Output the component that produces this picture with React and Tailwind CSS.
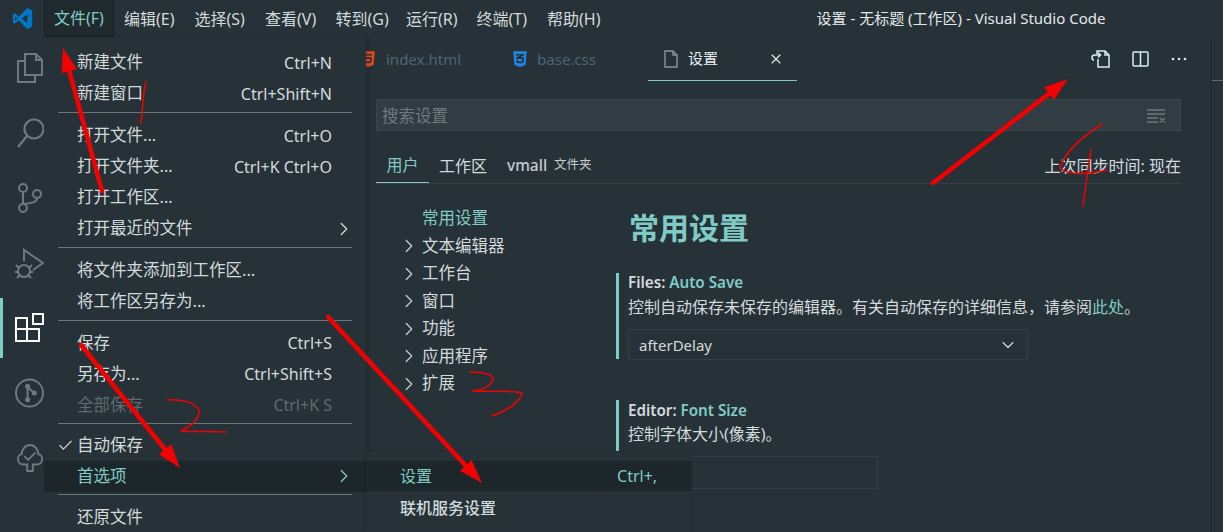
import { ChevronRight, ChevronDown, Check, X } from "lucide-react";
import { FaHtml5, FaCss3Alt } from "react-icons/fa";

const menuBar = ["文件(F)", "编辑(E)", "选择(S)", "查看(V)", "转到(G)", "运行(R)", "终端(T)", "帮助(H)"];

const fileMenu = [
  {
    items: [
      { label: "新建文件", keys: "Ctrl+N" },
      { label: "新建窗口", keys: "Ctrl+Shift+N" },
    ],
  },
  {
    sep: "h-[11px]",
    items: [
      { label: "打开文件...", keys: "Ctrl+O" },
      { label: "打开文件夹...", keys: "Ctrl+K Ctrl+O" },
      { label: "打开工作区..." },
      { label: "打开最近的文件", sub: true },
    ],
  },
  { sep: "h-[10.5px]", items: [{ label: "将文件夹添加到工作区..." }, { label: "将工作区另存为..." }] },
  {
    sep: "h-[11px]",
    items: [
      { label: "保存", keys: "Ctrl+S" },
      { label: "另存为...", keys: "Ctrl+Shift+S" },
      { label: "全部保存", keys: "Ctrl+K S", disabled: true },
    ],
  },
  { sep: "h-[9px]", items: [{ label: "自动保存", checked: true }, { label: "首选项", sub: true, active: true }] },
  { sep: "h-[10.5px]", items: [{ label: "还原文件" }] },
];

const tree = ["文本编辑器", "工作台", "窗口", "功能", "应用程序", "扩展"];

function MenuRow({ item }) {
  let color = "text-[#d4dadc]";
  if (item.disabled) color = "text-[#5f6b70]";
  if (item.active) color = "text-[#80cbc4] bg-[#1d262b]";
  return (
    <div className={`h-[31px] flex items-center pl-[33px] pr-[34px] text-[16.5px] ${color}`}>
      <span className="w-[33px] -ml-[33px] flex justify-center pl-[10px]">
        {item.checked && <Check size={17} strokeWidth={1.6} />}
      </span>
      <span>{item.label}</span>
      {item.keys && <span className="ml-auto text-[16px]">{item.keys}</span>}
      {item.sub && <ChevronRight size={22} strokeWidth={1.4} className="ml-auto -mr-[23px]" />}
    </div>
  );
}

function FilesIcon() {
  return (
    <svg width="26" height="30" viewBox="0 0 26 30" fill="none" stroke="#6e7a7f" strokeWidth="2">
      <path d="M8 1h11l6 6v15H8z" />
      <path d="M19 1v6h6" />
      <path d="M8 8H1v21h17v-7" />
    </svg>
  );
}

function SearchIcon() {
  return (
    <svg width="28" height="30" viewBox="0 0 28 30" fill="none" stroke="#6e7a7f" strokeWidth="2.2">
      <circle cx="17" cy="11" r="9.5" />
      <path d="M10 18L1 29" />
    </svg>
  );
}

function GitIcon() {
  return (
    <svg width="24" height="30" viewBox="0 0 24 30" fill="none" stroke="#6e7a7f" strokeWidth="2">
      <circle cx="5" cy="5" r="4" />
      <circle cx="5" cy="25" r="4" />
      <circle cx="19" cy="11" r="4" />
      <path d="M5 9v12M19 15c0 4-4 5-14 6" />
    </svg>
  );
}

function DebugIcon() {
  return (
    <svg width="29" height="31" viewBox="0 0 29 31" fill="none" stroke="#6e7a7f" strokeWidth="2">
      <path d="M9 13V2l19 13-10 7" />
      <circle cx="9" cy="23" r="6" />
      <path d="M1 17l3 3M17 17l-3 3M0 24h3M15 24h3M2 30l3-3M16 30l-3-3" />
    </svg>
  );
}

function ExtIcon() {
  return (
    <svg width="29" height="29" viewBox="0 0 29 29" fill="none" stroke="#ffffff" strokeWidth="2">
      <path d="M1 5h11v23H1zM1 16h23v12H12M12 5v11" />
      <rect x="18" y="1" width="10" height="10" />
    </svg>
  );
}

function RemoteIcon() {
  return (
    <svg width="29" height="30" viewBox="0 0 30 30" fill="none" stroke="#6e7a7f" strokeWidth="2">
      <circle cx="15" cy="15" r="14" />
      <path d="M13 9v13M13 9l7 6" />
      <circle cx="13" cy="8" r="1.6" fill="#6e7a7f" />
      <circle cx="20" cy="15" r="1.6" fill="#6e7a7f" />
      <circle cx="13" cy="22" r="1.6" fill="#6e7a7f" />
    </svg>
  );
}

function TreeIcon() {
  return (
    <svg width="26" height="30" viewBox="0 0 28 30" fill="none" stroke="#6e7a7f" strokeWidth="2">
      <path d="M11 29v-7H7c-4 0-6-3-6-6 0-3 2-5 4-5 0-5 4-10 9-10s9 5 9 10c2 0 4 2 4 5 0 3-2 6-6 6h-4v7z" />
      <path d="M8 13l4 4 8-8" />
    </svg>
  );
}

function Annotations() {
  const arrows = [
    [102, 191, 63, 48],
    [81, 345, 180, 468],
    [328, 317, 482, 483],
    [933, 183, 1068, 79],
  ];
  return (
    <svg className="absolute inset-0 pointer-events-none" width="1223" height="532" fill="none" stroke="#f50000">
      {arrows.map(([x1, y1, x2, y2]) => {
        const a = Math.atan2(y2 - y1, x2 - x1);
        const bx = x2 - 24 * Math.cos(a);
        const by = y2 - 24 * Math.sin(a);
        const px = 8 * Math.sin(a);
        const py = 8 * Math.cos(a);
        return (
          <g key={x1}>
            <line x1={x1} y1={y1} x2={bx} y2={by} strokeWidth="4.5" strokeLinecap="round" />
            <polygon points={`${x2},${y2} ${bx + px},${by - py} ${bx - px},${by + py}`} fill="#f50000" stroke="none" />
          </g>
        );
      })}
      <g strokeWidth="1.5" strokeLinecap="round" strokeLinejoin="round">
        <path d="M146 82C143 92 143 105 141 123" />
        <path d="M167 400C180 399 195 402 199 410C200 420 190 426 181 431C195 432 210 431 226 432" />
        <path d="M470 372C482 372 494 374 493 380C490 386 482 390 473 391C490 392 512 390 522 393C520 403 505 411 492 416" />
        <path d="M1102 124C1085 135 1065 150 1060 168C1068 176 1090 174 1107 170" />
        <path d="M1091 150C1088 170 1085 190 1083 206" />
      </g>
    </svg>
  );
}

export default function App() {
  return (
    <div
      className="relative w-[1223px] h-[532px] overflow-hidden bg-[#263238] text-[#d4dadc] flex flex-col"
      style={{ fontFamily: '"Noto Sans", "Noto Sans CJK SC", sans-serif' }}
    >
      {/* title bar */}
      <div className="h-[37px] flex items-center shrink-0">
        <div className="w-[44px] flex justify-center">
          <svg width="21" height="21" viewBox="0 0 24 24">
            <path fill="#0078c8" d="M17.5 0L7.8 9.6 3 6 1 7v10l2 1 4.8-3.6L17.5 24 23 21.5v-19zM17.5 7v10L11 12zM3.5 9.5L6 12l-2.5 2.5z" />
          </svg>
        </div>
        <div className="flex text-[16px] h-full">
          {menuBar.map((m, i) => (
            <div
              key={m}
              className={
                i === 0
                  ? "flex items-center w-[70px] pl-[9px] bg-[#1f292e] text-[#80cbc4] border border-t-0 border-[#1a2227]"
                  : "flex items-center w-[70.5px] pl-[10px]"
              }
            >
              {m}
            </div>
          ))}
        </div>
        <div className="ml-[209px] text-[15px] text-[#e3e8ea] whitespace-nowrap">设置 - 无标题 (工作区) - Visual Studio Code</div>
      </div>

      <div className="flex-1 flex min-h-0">
        {/* activity bar */}
        <div className="w-[44px] shrink-0 relative flex flex-col items-start pt-[16px]">
          <div className="h-[65px] pl-[17px]"><FilesIcon /></div>
          <div className="h-[65px] pl-[17px]"><SearchIcon /></div>
          <div className="h-[65px] pl-[18px]"><GitIcon /></div>
          <div className="h-[65px] pl-[15px]"><DebugIcon /></div>
          <div className="h-[65px] pl-[15px]"><ExtIcon /></div>
          <div className="h-[65px] pl-[15px]"><RemoteIcon /></div>
          <div className="h-[65px] pl-[17px]"><TreeIcon /></div>
          <div className="absolute left-0 top-[261px] w-[3px] h-[60px] bg-[#80cbc4]" />
        </div>

        {/* side bar, covered by the menu */}
        <div className="w-[322px] shrink-0 bg-[#263238]" />

        {/* editor */}
        <div className="flex-1 min-w-0 flex flex-col">
          <div className="h-[44px] flex items-center shrink-0 text-[15px] pr-[24px]">
            <div className="w-[11px] overflow-hidden flex justify-end shrink-0">
              <FaHtml5 size={18} className="text-[#e64a19] shrink-0" />
            </div>
            <span className="ml-[9px] text-[#4f6473]">index.html</span>
            <FaCss3Alt size={18} className="ml-[50px] text-[#1e88e5]" />
            <span className="ml-[8px] text-[#4f6473]">base.css</span>
            <div className="ml-[52px] w-[149px] h-full flex items-center border-b border-[#80cbc4] pl-[16px]">
              <svg width="14" height="18" viewBox="0 0 14 18" fill="none" stroke="#8a9499" strokeWidth="1.4">
                <path d="M1 1h8l4 4v12H1zM9 1v4h4" />
              </svg>
              <span className="ml-[10px] text-[#e8ecee]">设置</span>
              <X size={16} strokeWidth={1.6} className="ml-[50px] text-[#e8ecee]" />
            </div>
            <div className="ml-auto flex items-center gap-[21px]">
              <svg width="20" height="20" viewBox="0 0 20 20" fill="none" stroke="#d8edf5" strokeWidth="1.5">
                <path d="M6 5V2h8l4 4v12H7v-8M14 2v4h4" />
                <path d="M9 6H4C2 6 1 7 1 8.5S2 11 3 11M7 3.5L9.5 6 7 8.5" />
              </svg>
              <svg width="18" height="18" viewBox="0 0 18 18" fill="none" stroke="#d8edf5" strokeWidth="1.5">
                <rect x="1" y="2" width="15" height="14" rx="1" />
                <path d="M8.5 2v14" />
              </svg>
              <svg width="16" height="4" viewBox="0 0 16 4" fill="#d8edf5">
                <circle cx="2" cy="2" r="1.3" />
                <circle cx="8" cy="2" r="1.3" />
                <circle cx="14" cy="2" r="1.3" />
              </svg>
            </div>
          </div>

          <div className="flex-1 min-h-0 pl-[10px] pr-[30px] pt-[18px]">
            {/* search */}
            <div className="h-[32px] bg-[#313c43] border border-[#3b464c] flex items-center pl-[5px] pr-[6px] text-[16.5px] text-[#6f7a7f]">
              <span className="mt-[3px]">搜索设置</span>
              <svg className="ml-auto mr-[8px]" width="20" height="15" viewBox="0 0 20 15" fill="none" stroke="#6f7a7f" strokeWidth="1.3">
                <path d="M1 2h18M1 6h18M1 10h11M1 14h11M14 10l5 4.5M19 10l-5 4.5" />
              </svg>
            </div>

            {/* scope tabs */}
            <div className="mt-[19px] h-[34px] flex items-center border-b border-[#3a3f40] text-[16px]">
              <div className="h-full w-[53px] flex items-center justify-center border-b border-[#80cbc4] text-[#80cbc4] pb-[2px]">用户</div>
              <span className="ml-[10px] mb-[2px]">工作区</span>
              <span className="ml-[20px] mb-[2px] text-[15.5px] font-medium text-[#c4cbce]">vmall</span>
              <span className="ml-[7px] mb-[2px] text-[12.5px] text-[#c4cbce]">文件夹</span>
              <span className="ml-auto mb-[2px]">上次同步时间: 现在</span>
            </div>

            <div className="flex">
              {/* settings tree */}
              <div className="w-[254px] pl-[46px] pt-[21px] text-[16.5px] shrink-0">
                <div className="h-[27.5px] flex items-center text-[#80cbc4]">常用设置</div>
                {tree.map((t) => (
                  <div key={t} className="h-[27.5px] flex items-center">
                    <ChevronRight size={22} strokeWidth={1.4} className="-ml-[24px] mr-[2px] text-[#c0d0d4]" />
                    {t}
                  </div>
                ))}
              </div>

              {/* settings list */}
              <div className="flex-1 min-w-0 -ml-[14px]">
                <h1 className="mt-[23px] ml-[13px] h-[40px] flex items-center text-[30px] font-bold text-[#80cbc4]">常用设置</h1>
                <div className="mt-[26px] border-l-[3px] border-[#80cbc4] pl-[9px] h-[86px]">
                  <div className="text-[15.2px] leading-[18px] font-semibold">
                    Files: <span className="text-[#80cbc4]">Auto Save</span>
                  </div>
                  <div className="mt-[7px] text-[16px] leading-[18px]">
                    控制自动保存未保存的编辑器。有关自动保存的详细信息，请参阅<span className="text-[#80cbc4]">此处</span>。
                  </div>
                  <div className="mt-[13px] w-[400px] h-[31px] border border-[#333f45] flex items-center pl-[10px] pr-[9px] text-[15px]">
                    <span className="mt-[1px]">afterDelay</span>
                    <ChevronDown size={20} strokeWidth={1.4} className="ml-auto" />
                  </div>
                </div>
                <div className="mt-[41px] border-l-[3px] border-[#80cbc4] pl-[9px] h-[51px]">
                  <div className="text-[15.2px] leading-[18px] font-semibold pt-[1px]">
                    Editor: <span className="text-[#80cbc4]">Font Size</span>
                  </div>
                  <div className="mt-[6px] text-[16px] leading-[18px]">控制字体大小(像素)。</div>
                  <div className="mt-[13px] w-[250px] h-[33px] border border-[#333f45]" />
                </div>
              </div>
            </div>
          </div>
        </div>

        {/* overview ruler */}
        <div className="w-[12px] shrink-0 border-l border-[#1f292e] pt-[43px]">
          <div className="h-px bg-[#5a6e78]" />
        </div>
      </div>

      {/* file menu */}
      <div className="absolute left-[44px] top-[37px] bottom-0 w-[322px] bg-[#263238] pt-[10px] shadow-[2px_0_4px_rgba(0,0,0,0.15)]">
        {fileMenu.map((group, i) => (
          <div key={i}>
            {group.sep && (
              <div className={`${group.sep} box-border pb-[4px] flex items-center px-[14px]`}>
                <div className="h-px w-full bg-[#6b767b]" />
              </div>
            )}
            {group.items.map((item) => (
              <MenuRow key={item.label} item={item} />
            ))}
          </div>
        ))}
      </div>

      {/* preferences submenu */}
      <div className="absolute left-[366px] top-[452px] bottom-0 w-[325px] bg-[#263238] pt-[9px] text-[16px] shadow-[0_0_4px_rgba(0,0,0,0.2)]">
        <div className="h-[30px] flex items-center pl-[34px] bg-[#1d262b] text-[#80cbc4]">
          <span>设置</span>
          <span className="ml-[185px]">Ctrl+,</span>
        </div>
        <div className="h-[34px] flex items-center pl-[34px] font-medium">联机服务设置</div>
      </div>

      <Annotations />
    </div>
  );
}
